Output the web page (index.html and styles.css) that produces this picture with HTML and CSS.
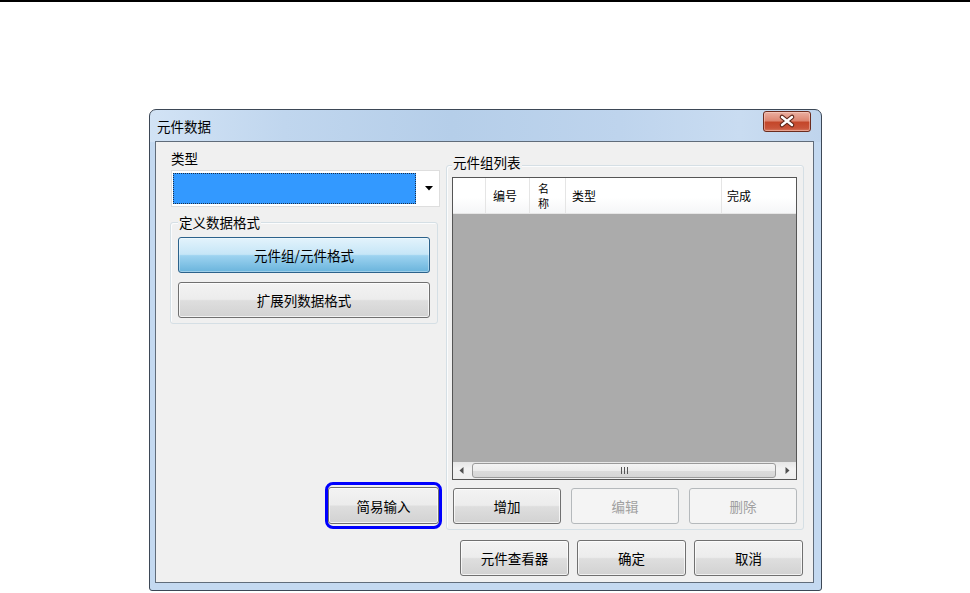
FILE: index.html
```html
<!DOCTYPE html>
<html lang="zh-CN">
<head>
<meta charset="UTF-8">
<title>元件数据</title>
<link rel="stylesheet" href="styles.css">
</head>
<body>

<div class="topline"></div>

<div class="stage">
    <div class="window">

        <!-- title bar -->
        <div class="titlebar">
            <span class="title">元件数据</span>
            <span class="close-btn">
                <svg width="46" height="19" viewBox="0 0 46 19">
                    <path d="M18 5 L28 13 M28 5 L18 13" stroke="#5a2418" stroke-width="4.6" stroke-linecap="round"/>
                    <path d="M18 5 L28 13 M28 5 L18 13" stroke="#ffffff" stroke-width="2.4" stroke-linecap="round"/>
                </svg>
            </span>
        </div>

        <div class="client">
            <div class="main">

                <!-- left side -->
                <div class="left-col">
                    <div class="field-label">类型</div>
                    <div class="combo">
                        <div class="combo-value"></div>
                        <svg class="combo-arrow" width="8" height="5" viewBox="0 0 8 5"><path d="M0 0 H8 L4 4.5 Z" fill="#000"/></svg>
                    </div>
                    <div class="group format-group">
                        <div class="group-title">定义数据格式</div>
                        <button class="btn btn-wide btn-pressed">元件组/元件格式</button>
                        <button class="btn btn-wide second">扩展列数据格式</button>
                    </div>
                    <div class="spacer"></div>
                    <div class="focus-ring">
                        <button class="btn btn-std">简易输入</button>
                    </div>
                </div>

                <!-- component group list -->
                <div class="group list-group">
                    <div class="group-title">元件组列表</div>
                    <div class="listview">
                        <div class="lv-header">
                            <div class="lv-col c1"></div>
                            <div class="lv-col c2">编号</div>
                            <div class="lv-col c3"><span>名</span><span>称</span></div>
                            <div class="lv-col c4">类型</div>
                            <div class="lv-col c5">完成</div>
                        </div>
                        <div class="lv-body"></div>
                        <div class="hscroll">
                            <div class="sb-arrow">
                                <svg width="5" height="7" viewBox="0 0 5 7"><path d="M4.5 0 V7 L0.5 3.5 Z" fill="#505050"/></svg>
                            </div>
                            <div class="sb-track">
                                <div class="sb-thumb">
                                    <svg width="7" height="7" viewBox="0 0 7 7"><path d="M0.5 0 V7 M3.5 0 V7 M6.5 0 V7" stroke="#555" stroke-width="1"/></svg>
                                </div>
                            </div>
                            <div class="sb-arrow">
                                <svg width="5" height="7" viewBox="0 0 5 7"><path d="M0.5 0 V7 L4.5 3.5 Z" fill="#505050"/></svg>
                            </div>
                        </div>
                    </div>
                    <div class="list-buttons">
                        <button class="btn btn-std">增加</button>
                        <button class="btn btn-std" disabled>编辑</button>
                        <button class="btn btn-std" disabled>删除</button>
                    </div>
                </div>

            </div>

            <div class="actions">
                <button class="btn btn-std">元件查看器</button>
                <button class="btn btn-std">确定</button>
                <button class="btn btn-std">取消</button>
            </div>
        </div>

    </div>
</div>

</body>
</html>
```

FILE: styles.css
```css
body { margin: 0; background: #fff; font-family: "Noto Sans CJK SC", "Liberation Sans", sans-serif; font-size: 13.5px; color: #000; }
.topline { height: 2px; background: #000; }
.stage { padding: 107px 0 0 149px; }

/* window frame */
.window {
    width: 673px;
    height: 482px;
    box-sizing: border-box;
    border: 1px solid #3d4856;
    border-radius: 7px 7px 3px 3px;
    padding: 0 7px 7px 5px;
    display: flex;
    flex-direction: column;
    background:
        linear-gradient(to right, #d2e3f5 0%, #c0d6ee 20%, #b5cee9 45%, #bed4ed 70%, #c9dcf1 88%, #bfd4ec 100%) top / 100% 32px no-repeat,
        #c4d9f0;
}
.titlebar { height: 31px; display: flex; justify-content: space-between; align-items: flex-start; }
.title { padding: 9px 0 0 2px; line-height: 14px; }
.close-btn {
    margin: 1px 3px 0 0;
    width: 46px;
    height: 19px;
    border: 1px solid #6b2c1e;
    border-radius: 3px;
    background: linear-gradient(#eab0a2 0%, #dd8671 45%, #c4472a 55%, #c9543a 85%, #d77b60 100%);
    box-shadow: inset 0 0 0 1px rgba(255, 220, 210, 0.45);
    display: flex;
}

.client {
    flex: 1;
    border: 1px solid #606c7a;
    background: #f0f0f0;
    display: flex;
    flex-direction: column;
}
.main { display: flex; gap: 8px; padding: 9px 9px 0 14px; }

/* group boxes */
.group {
    border: 1px solid #d5dfe5;
    border-radius: 3px;
    box-shadow: inset 1px 1px 0 #fbfcfd;
    display: flex;
    flex-direction: column;
}
.group-title { background: #f0f0f0; line-height: 14px; padding: 0 1px; align-self: flex-start; }

.left-col { width: 268px; display: flex; flex-direction: column; }
.field-label { line-height: 14px; padding-left: 1px; }
.combo {
    margin: 5px 0 0 1px;
    width: 269px;
    height: 37px;
    box-sizing: border-box;
    background: #fff;
    border: 1px solid #dedede;
    padding: 2px 23px 2px 1px;
    position: relative;
}
.combo-value { height: 100%; background: #3399ff; border: 1px dotted #1b2f4a; box-sizing: border-box; }
.combo-arrow { position: absolute; right: 6px; top: 15px; }

.format-group { margin-top: 15px; padding: 0 7px 5px 7px; }
.format-group .group-title { margin: -8px 0 0 0; }
.btn-wide { margin-top: 8px; height: 36px; }
.btn-wide.second { margin-top: 9px; }
.spacer { flex: 1; }
.focus-ring {
    align-self: flex-end;
    margin: 0 -4px 1px 0;
    border: 3px solid #0000ff;
    border-radius: 8px;
    padding: 2px 0;
    display: flex;
}

/* buttons */
.btn {
    font: inherit;
    color: #000;
    border: 1px solid #707070;
    border-radius: 3px;
    background: linear-gradient(#f3f3f3 0%, #ececec 48%, #dedede 52%, #d2d2d2 100%);
    box-shadow: inset 0 0 0 1px rgba(255, 255, 255, 0.7);
    padding: 0;
}
.btn-std { width: 108px; height: 36px; }
.focus-ring .btn-std { width: 111px; height: 37px; }
.btn-pressed {
    border-color: #2c628b;
    background: linear-gradient(#e3f3fc 0%, #c6e6f7 48%, #9dd3f0 52%, #6ab4dc 100%);
    box-shadow: inset 0 0 0 1px rgba(255, 255, 255, 0.35);
}
.btn:disabled {
    border-color: #b5b9bc;
    background: #f4f4f4;
    color: #a0a0a0;
    box-shadow: none;
}

/* list group */
.list-group { flex: 1; margin-top: 14px; padding: 0 6px 5px 5px; }
.list-group .group-title { margin: -11px 0 0 0; }
.listview {
    margin-top: 8px;
    height: 303px;
    box-sizing: border-box;
    border: 1px solid #555;
    display: flex;
    flex-direction: column;
}
.lv-header {
    height: 35px;
    display: flex;
    background: linear-gradient(#ffffff 0%, #ffffff 55%, #f5f6f7 100%);
    border-bottom: 1px solid #e6e6e6;
    font-size: 12px;
    line-height: 14px;
}
.lv-col { border-right: 1px solid #e5e5e5; display: flex; align-items: center; box-sizing: border-box; }
.c1 { width: 33px; }
.c2 { width: 44px; padding-left: 7px; }
.c3 { width: 36px; padding-left: 8px; flex-direction: column; justify-content: center; align-items: flex-start; font-size: 11px; }
.c3 span { display: block; line-height: 15px; height: 15px; }
.c4 { width: 156px; padding-left: 6px; }
.c5 { flex: 1; padding-left: 5px; border-right: none; }
.lv-body { flex: 1; background: #ababab; }

.hscroll { height: 17px; display: flex; background: linear-gradient(#e6e6e6, #f2f2f2 40%, #eeeeee); }
.sb-arrow { width: 17px; display: flex; align-items: center; justify-content: center; }
.sb-track { flex: 1; padding: 1px 3px 1px 2px; display: flex; }
.sb-thumb {
    flex: 1;
    border: 1px solid #9a9a9a;
    border-radius: 3px;
    background: linear-gradient(#f4f4f4 0%, #ececec 50%, #dcdcdc 52%, #d6d6d6 100%);
    display: flex;
    align-items: center;
    justify-content: center;
}

.list-buttons { margin-top: 8px; padding-left: 1px; display: flex; justify-content: space-between; }

/* dialog buttons */
.actions { display: flex; justify-content: flex-end; gap: 8px; padding: 10px 10px 0 0; }
.actions .btn-std { width: 109px; }
```
